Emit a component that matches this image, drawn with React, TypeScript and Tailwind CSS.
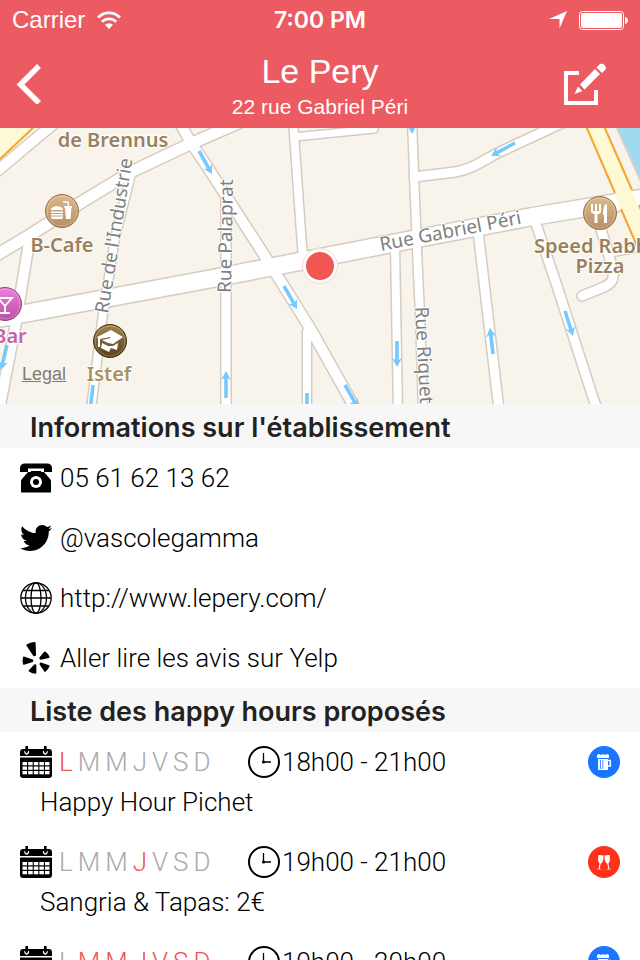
import type { ReactNode } from 'react';
import { FaTwitter } from 'react-icons/fa';

type DrinkKind = 'beer' | 'champagne';

interface HappyHour {
  id: number;
  days: number[];
  hours: string;
  label: string;
  drink: DrinkKind;
}

const DAYS = ['L', 'M', 'M', 'J', 'V', 'S', 'D'];

const HAPPY_HOURS: HappyHour[] = [
  { id: 1, days: [0], hours: '18h00 - 21h00', label: 'Happy Hour Pichet', drink: 'beer' },
  { id: 2, days: [3], hours: '19h00 - 21h00', label: 'Sangria & Tapas: 2€', drink: 'champagne' },
  { id: 3, days: [1, 2, 3, 4, 5, 6], hours: '19h00 - 20h00', label: 'Happy Hour', drink: 'beer' },
];

const STREETS: Array<{ d: string; w: number }> = [
  { d: 'M-10 192 L22 186 L210 151 L420 110 L530 89 L650 69', w: 17 },
  { d: 'M-10 49 L58 -8', w: 10 },
  { d: 'M-10 131 L30 107 L80 75 L133 43 L190 16 L245 -8', w: 11 },
  { d: 'M178 -8 L190 13 L210 43 L268 133 L310 200 L356 282', w: 10 },
  { d: 'M30 108 L15 200 L-1 282', w: 10 },
  { d: 'M131 46 L115 110 L102 193 L91 282', w: 8 },
  { d: 'M226 68 L226 282', w: 9 },
  { d: 'M293 -8 L303 132', w: 8 },
  { d: 'M294 9 L374 1 L375 -6', w: 7 },
  { d: 'M307 204 L307 282', w: 8 },
  { d: 'M412 -8 L417 123 L420 187 L423 282', w: 8 },
  { d: 'M395 118 L398 282', w: 8 },
  { d: 'M414 49 L455 44 C474 41 486 30 504 22 L562 -5', w: 9 },
  { d: 'M478 103 L499 282', w: 9 },
  { d: 'M535 93 L556 155 L597 282', w: 9 },
  { d: 'M600 98 L612 138 C615 150 613 155 604 159 L582 168', w: 9 },
  { d: 'M613 125 L650 118', w: 6 },
];

const ARROWS: Array<[number, number, number, number]> = [
  [199, 23, 212, 46],
  [284, 158, 297, 181],
  [345, 257, 358, 280],
  [226, 270, 226, 243],
  [307, 265, 307, 292],
  [397, 213, 397, 239],
  [412, -20, 412, 6],
  [515, 15, 491, 28],
  [493, 226, 490, 200],
  [565, 183, 573, 208],
  [7, 217, 1, 242],
  [93, 257, 90, 284],
];

function Arrow({ x1, y1, x2, y2 }: { x1: number; y1: number; x2: number; y2: number }) {
  const angle = (Math.atan2(y2 - y1, x2 - x1) * 180) / Math.PI;
  const length = Math.hypot(x2 - x1, y2 - y1);
  return (
    <g transform={`translate(${x1} ${y1}) rotate(${angle})`}>
      <path d={`M0 -1.8 H${length - 7} L${length - 9} -5 L${length} 0 L${length - 9} 5 L${length - 7} 1.8 H0 Z`} fill="#76c9ff" />
    </g>
  );
}

function Poi({ x, y, fill, ring, children }: { x: number; y: number; fill: string; ring: string; children: ReactNode }) {
  return (
    <g transform={`translate(${x} ${y})`}>
      <circle r="16.5" fill={fill} stroke={ring} strokeWidth="1" />
      <circle r="15" fill="none" stroke="#fff" strokeOpacity=".25" strokeWidth="1" />
      {children}
    </g>
  );
}

function StreetMap() {
  return (
    <svg viewBox="0 0 640 276" preserveAspectRatio="xMidYMid slice" className="block h-full w-full" role="img" aria-label="Plan">
      <defs>
        <linearGradient id="tan" x1="0" y1="0" x2="0" y2="1">
          <stop offset="0" stopColor="#dcb98a" />
          <stop offset="1" stopColor="#b48f62" />
        </linearGradient>
        <linearGradient id="brown" x1="0" y1="0" x2="0" y2="1">
          <stop offset="0" stopColor="#a2844f" />
          <stop offset="1" stopColor="#57401a" />
        </linearGradient>
        <linearGradient id="pink" x1="0" y1="0" x2="0" y2="1">
          <stop offset="0" stopColor="#ec7fd8" />
          <stop offset="1" stopColor="#bb4fa6" />
        </linearGradient>
      </defs>
      <rect width="640" height="276" fill="#f8f4ec" />
      <path d="M0 0 H33 L0 31 Z" fill="#fdf9d4" />
      <path d="M-2 33 L34 -1" stroke="#f3a52c" strokeWidth="2" />
      <path d="M616 -2 H642 V56 Z" fill="#9edbf1" stroke="#d6d0c6" strokeWidth="2" />

      <g fill="none" stroke="#d5ccc0" strokeLinecap="round" strokeLinejoin="round">
        {STREETS.map((s) => (
          <path key={s.d} d={s.d} strokeWidth={s.w + 3} />
        ))}
      </g>
      <g fill="none" stroke="#fff" strokeLinecap="round" strokeLinejoin="round">
        {STREETS.map((s) => (
          <path key={s.d} d={s.d} strokeWidth={s.w} />
        ))}
      </g>

      <path d="M593 -6 L624 66 L652 133" fill="none" stroke="#fdf9d4" strokeWidth="17" />
      <g fill="none" stroke="#f3a52c" strokeWidth="2">
        <path d="M586 -2 L615 65" />
        <path d="M604 -2 L632 62" />
        <path d="M621 81 L641 127" />
        <path d="M639 77 L642 84" />
      </g>

      {ARROWS.map(([x1, y1, x2, y2]) => (
        <Arrow key={`${x1}-${y1}`} x1={x1} y1={y1} x2={x2} y2={y2} />
      ))}

      <g className="font-['Noto_Sans',sans-serif] text-[19px] font-normal" fill="#808080" stroke="#fff" strokeWidth="2" strokeLinejoin="round" paintOrder="stroke">
        <text transform="translate(108 186) rotate(-81)">Rue de l'Industrie</text>
        <text transform="translate(231 165) rotate(-89)">Rue Palaprat</text>
        <text transform="translate(381 123) rotate(-11)">Rue Gabriel Péri</text>
        <text transform="translate(415 179) rotate(87)">Rue Riquet</text>
      </g>
      <g className="font-['Noto_Sans',sans-serif] text-[20px] font-semibold" fill="#9a815d" stroke="#fff" strokeWidth="2" strokeLinejoin="round" paintOrder="stroke" textAnchor="middle">
        <text x="113" y="19">de Brennus</text>
        <text x="62" y="124">B-Cafe</text>
        <text x="598" y="125">Speed Rabbit</text>
        <text x="600" y="145">Pizza</text>
        <text x="109" y="253" fill="#a8935c">Istef</text>
        <text x="10" y="215" fill="#c462ac">Bar</text>
      </g>

      <Poi x={62} y={83} fill="url(#tan)" ring="#94734a">
        <path d="M-11 -1 C-11 -6 1 -6 1 -1 Z M-11 .5 H1 V2 H-11 Z M-11 3 H1 V4.600 H-11 Z M-11 5.600 H1 C1 8 0 8 -1 8 H-9 C-11 8 -11 7 -11 5.600 Z" fill="#fff" />
        <path d="M2 -5 H10 V-3.500 H9.500 L8.500 8 H4 L3 -3.500 H2 Z M5.500 -5 V-8 L1 -8.500 V-10 L7 -9.200 V-5 Z" fill="#fff" />
      </Poi>
      <Poi x={110} y={213} fill="url(#brown)" ring="#4a3615">
        <path d="M-13 -4 L1 -11 L13 -4 L3 3 L-2 2 L-8 -1 L1 -3 L0 -4 L-10 -2 V6 H-12 V-3 Z" fill="#fff" />
        <path d="M-8 2 L-2 5 H3 L8 2 L7 9 L1 7 L-1 11 L-9 7 Z" fill="#fff" />
      </Poi>
      <Poi x={5} y={176} fill="url(#pink)" ring="#9c3f8a">
        <path d="M-7 -6 H7 L0 2 Z M0 2 V9 M-5 9 H5" fill="none" stroke="#fff" strokeWidth="1.800" />
      </Poi>
      <Poi x={600} y={85} fill="url(#tan)" ring="#94734a">
        <path d="M-9 -9 V-2 C-9 1 -6 1 -5.500 1 V10 H-2.500 V1 C-1 1 1 1 1 -2 V-9 H-1 V-2 H-3 V-9 H-5 V-2 H-7 V-9 Z M4 10 V2 H3 C3 -4 4 -9 7 -9 V10 Z" fill="#fff" />
      </Poi>

      <circle cx="320" cy="138" r="17.500" fill="#fff" stroke="#f9d6d2" strokeWidth="1" />
      <circle cx="320" cy="138" r="14" fill="#f05652" />
    </svg>
  );
}

function PhoneIcon() {
  return (
    <svg viewBox="0 0 32 32" className="size-8" aria-hidden="true">
      <path d="M0 10 V6 C0 3 2 1.500 5 1.500 H27 C30 1.500 32 3 32 6 V10 H24 V6.500 H8 V10 Z" />
      <path d="M11 9 H21 V10 H24 L30 17 C31 18 31 19 31 20 V30.500 H1 V20 C1 19 1 18 2 17 L8 10 H11 Z" />
      <circle cx="16" cy="20" r="6" fill="#fff" />
      <circle cx="16" cy="20" r="3" />
    </svg>
  );
}

function GlobeIcon() {
  return (
    <svg viewBox="0 0 32 32" className="size-8" fill="none" stroke="#000" strokeWidth="1.300" aria-hidden="true">
      <circle cx="16" cy="16" r="15.200" />
      <ellipse cx="16" cy="16" rx="10.500" ry="15.200" />
      <ellipse cx="16" cy="16" rx="5" ry="15.200" />
      <path d="M1 16 H31 M3 8.500 H29 M3 24 H29" />
    </svg>
  );
}

function YelpIcon() {
  return (
    <svg viewBox="0 0 32 32" className="size-8" strokeWidth="1.500" stroke="#000" strokeLinejoin="round" aria-hidden="true">
      <path d="M7 3.200 C9 1.800 12 .8 14.800 .8 L15.300 13 L14 13.500 Z" />
      <path d="M3.800 15.200 L12.500 18.200 V19.200 L3.800 22 C3.200 19.600 3.200 17.500 3.800 15.200 Z" />
      <path d="M15.600 23.200 V31 C13.500 31 11.500 30.200 9.400 28.800 L14.800 22.900 Z" />
      <path d="M20.600 21.200 L28.800 24 C28 26.200 26.600 28 25 29.200 L20.200 22.200 Z" />
      <path d="M20 16 L24.800 10.200 C26.600 11.400 28.200 13.100 28.800 15.200 L20.600 16.900 Z" />
    </svg>
  );
}

function CalendarIcon() {
  return (
    <svg viewBox="0 0 32 32" className="size-8 shrink-0" aria-hidden="true">
      <path d="M0 10 V6 C0 4 1.500 3 3 3 H29 C30.500 3 32 4 32 6 V10 Z" />
      <path d="M0 11.500 H32 V29 C32 31 31 32 29 32 H3 C1 32 0 31 0 29 Z" />
      <path d="M5 5 C4 9 9 9 8.500 5 M23.500 5 C23 9 28 9 27 5" fill="none" stroke="#fff" strokeWidth="1.300" />
      <path d="M6.700 0 V6 M25.300 0 V6" stroke="#000" strokeWidth="2.600" />
      <g fill="#fff">
        {[16, 20.5, 25].map((y) =>
          [2.5, 8.2, 13.8, 19.4, 25].map((x) => <rect key={`${x}-${y}`} x={x} y={y} width="4.500" height="3.300" />),
        )}
      </g>
    </svg>
  );
}

function ClockIcon() {
  return (
    <svg viewBox="0 0 32 32" className="size-8 shrink-0" fill="none" stroke="#000" aria-hidden="true">
      <circle cx="16" cy="16" r="15" strokeWidth="2" />
      <path d="M15.500 7 V17 M14 16 H23" strokeWidth="1.300" />
      <circle cx="15.500" cy="16" r="1.500" fill="#000" stroke="none" />
    </svg>
  );
}

function DrinkIcon({ kind }: { kind: DrinkKind }) {
  if (kind === 'beer') {
    return (
      <svg viewBox="0 0 32 32" className="ml-auto size-8 shrink-0" role="img" aria-label="Bière">
        <circle cx="16" cy="16" r="16" fill="#1a75ff" />
        <path d="M9 9 L11 8 L13 9 L15 8 L17 9 L19 8 L21 9 V12 H9 Z M10 13 H20 V24 H10 Z" fill="#fff" />
        <path d="M20 14.500 H22.300 V20 H20" fill="none" stroke="#fff" strokeWidth="1.500" />
        <path d="M12.500 14 V23 M14.800 14 V23" stroke="#1a75ff" strokeWidth=".8" />
      </svg>
    );
  }
  return (
    <svg viewBox="0 0 32 32" className="ml-auto size-8 shrink-0" role="img" aria-label="Champagne">
      <circle cx="16" cy="16" r="16" fill="#ff321b" />
      <path d="M10.500 9 L15.500 9.500 C15.600 14 14.500 17 12.700 17.500 L11.700 22.800 L14 23.600 L8 23.200 L10.700 22.700 L11.600 17.200 C9.800 16 9.700 13 10.500 9 Z" fill="#fff" />
      <path d="M21.500 9 L16.500 9.500 C16.400 14 17.500 17 19.300 17.500 L20.300 22.800 L18 23.600 L24 23.200 L21.300 22.700 L20.400 17.200 C22.200 16 22.300 13 21.500 9 Z" fill="#fff" />
    </svg>
  );
}

function StatusBar() {
  return (
    <div className="grid h-10 grid-cols-3 items-center px-3">
      <div className="flex items-center gap-3 text-2xl">
        Carrier
        <svg viewBox="0 0 24 18" className="h-[18px] w-6" aria-hidden="true">
          <path d="M12 18 L8 13.700 C10 12 14 12 16 13.700 Z" fill="#fff" />
          <path d="M4.800 10.700 C9 7 15 7 19.200 10.700 M1 6.500 C7 .2 17 .2 23 6.500" fill="none" stroke="#fff" strokeWidth="2.800" />
        </svg>
      </div>
      <div className="text-center font-['Inter',sans-serif] text-[23px] font-semibold">7:00 PM</div>
      <div className="flex items-center justify-end gap-3">
        <svg viewBox="0 0 18 18" className="size-[18px]" fill="#fff" aria-hidden="true">
          <path d="M18 0 L10.500 17.500 V8 H0 Z" />
        </svg>
        <svg viewBox="0 0 49 19" className="h-[19px] w-[49px]" aria-hidden="true">
          <rect x=".5" y=".5" width="44" height="18" rx="3" fill="none" stroke="#fff" />
          <rect x="2" y="2" width="41" height="15" rx="2" fill="#fff" />
          <path d="M46 6 C50 6.500 50 12.500 46 13 Z" fill="#fff" />
        </svg>
      </div>
    </div>
  );
}

function NavBar() {
  return (
    <div className="flex h-22 items-center justify-between px-4">
      <button type="button" aria-label="Retour" className="w-16">
        <svg viewBox="0 0 26 40" className="h-10 w-[26px]" fill="none" stroke="#fff" strokeWidth="5.500" aria-hidden="true">
          <path d="M23 2 L4.500 20.500 L23 39" />
        </svg>
      </button>
      <div className="pt-1.5 text-center">
        <h1 className="text-[34px] leading-10">Le Pery</h1>
        <p className="text-[21px] leading-8">22 rue Gabriel Péri</p>
      </div>
      <button type="button" aria-label="Modifier" className="flex w-16 justify-end pr-[18px]">
        <svg viewBox="0 0 44 44" className="size-11" fill="#fff" aria-hidden="true">
          <path d="M17 9 V13 H6 V39 H32 V28 H36 V43 H2 V9 Z" />
          <path d="M12.500 32 L16 24.500 L20.500 29 Z M18 22.500 L33 7 L38 12 L22.500 27.500 Z M34.500 5.500 L38 2 C41 .5 45 4 43.500 7.500 L40 11 Z" />
        </svg>
      </button>
    </div>
  );
}

function SectionTitle({ children }: { children: ReactNode }) {
  return (
    <h2 className="h-11 bg-[#f7f7f7] px-[30px] font-['Inter',sans-serif] text-[27px] leading-[48px] font-semibold text-[#222]">
      {children}
    </h2>
  );
}

function InfoRow({ icon, href, children }: { icon: ReactNode; href: string; children: ReactNode }) {
  return (
    <li>
      <a href={href} className="flex h-15 items-center gap-2 px-5">
        {icon}
        {children}
      </a>
    </li>
  );
}

function HappyHourRow({ item }: { item: HappyHour }) {
  return (
    <li className="h-25 px-5 pt-[14px]">
      <div className="flex h-8 items-center">
        <CalendarIcon />
        <div className="flex w-49 gap-[5px] pl-[7px]">
          {DAYS.map((day, i) => (
            <span key={i} className={item.days.includes(i) ? 'text-[#f05652]' : 'text-[#aaa]'}>
              {day}
            </span>
          ))}
        </div>
        <ClockIcon />
        <span className="pl-0.5">{item.hours}</span>
        <DrinkIcon kind={item.drink} />
      </div>
      <p className="pl-5 leading-[48px]">{item.label}</p>
    </li>
  );
}

export default function App() {
  return (
    <div className="flex h-screen flex-col bg-white font-['Liberation_Sans',sans-serif] text-black">
      <header className="shrink-0 bg-[#eb5b61] text-white">
        <StatusBar />
        <NavBar />
      </header>
      <main className="min-h-0 flex-1 overflow-y-auto font-['Roboto',sans-serif] text-[26px] font-light [scrollbar-width:none]">
        <div className="relative h-69">
          <StreetMap />
          <a href="#legal" className="absolute bottom-4 left-[22px] font-['Liberation_Sans',sans-serif] text-lg font-normal text-[#7f7c78] underline">
            Legal
          </a>
        </div>
        <SectionTitle>Informations sur l'établissement</SectionTitle>
        <ul>
          <InfoRow icon={<PhoneIcon />} href="tel:0561621362">
            05 61 62 13 62
          </InfoRow>
          <InfoRow icon={<FaTwitter className="size-8" />} href="#twitter">
            @vascolegamma
          </InfoRow>
          <InfoRow icon={<GlobeIcon />} href="http://www.lepery.com/">
            http://www.lepery.com/
          </InfoRow>
          <InfoRow icon={<YelpIcon />} href="#yelp">
            Aller lire les avis sur Yelp
          </InfoRow>
        </ul>
        <SectionTitle>Liste des happy hours proposés</SectionTitle>
        <ul>
          {HAPPY_HOURS.map((item) => (
            <HappyHourRow key={item.id} item={item} />
          ))}
        </ul>
      </main>
    </div>
  );
}
